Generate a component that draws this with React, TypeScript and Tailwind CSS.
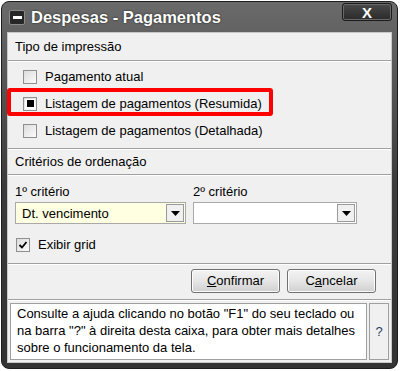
import React from 'react'

function Check({ mode }: { mode?: 'square' | 'tick' }) {
  return (
    <span className="flex h-[14px] w-[14px] shrink-0 items-center justify-center border border-[#8e8f8f] bg-gradient-to-br from-[#dcdcdc] to-[#fbfbfb]">
      {mode === 'square' && (
        <span className="flex h-[10px] w-[10px] items-center justify-center bg-white">
          <span className="h-[7px] w-[7px] bg-black" />
        </span>
      )}
      {mode === 'tick' && (
        <svg width="10" height="10" viewBox="0 0 10 10">
          <path d="M1.5 5 L4 7.5 L8.5 2" fill="none" stroke="#000" strokeWidth="1.8" />
        </svg>
      )}
    </span>
  )
}

function Select({ value, yellow }: { value?: string; yellow?: boolean }) {
  return (
    <div
      className={`flex h-[22px] items-center border border-[#a9a9a9] pl-[6px] pr-[1px] ${
        yellow ? 'bg-[#ffffe1]' : 'bg-white'
      }`}
    >
      <span className="flex-1 text-[13px] leading-none">{value}</span>
      <span className="flex h-[18px] w-[18px] items-center justify-center border border-[#9a9a9a] bg-[#f0f0f0]">
        <svg width="9" height="5" viewBox="0 0 9 5">
          <path d="M0 0 H9 L4.5 5 Z" fill="#000" />
        </svg>
      </span>
    </div>
  )
}

function Btn({ pre, u, rest }: { pre: string; u: string; rest: string }) {
  return (
    <button className="h-[24px] w-[89px] rounded-[3px] border border-[#707070] bg-gradient-to-b from-[#f3f3f3] via-[#e6e6e6] to-[#cfcfcf] text-[13px] text-black shadow-[inset_0_0_0_1px_#fcfcfc]">
      {pre}
      <span className="underline">{u}</span>
      {rest}
    </button>
  )
}

export default function App() {
  return (
    <div className="h-[371px] w-[400px] bg-white font-['Liberation_Sans',Arial,sans-serif] text-black">
      <div className="ml-[1px] mt-[1px] flex h-[368px] w-[397px] flex-col rounded-[8px] border border-[#1e1e1e] bg-gradient-to-b from-[#6a6a6a] via-[#3c3c3c] to-[#333333] px-[5px] pb-[5px]">
        {/* title bar */}
        <div className="relative flex h-[30px] items-center">
          <span className="ml-[2px] flex h-[15px] w-[16px] items-center justify-center rounded-[2px] border border-[#8a8a8a] bg-[#262626]">
            <span className="h-[3px] w-[9px] bg-white" />
          </span>
          <span className="ml-[6px] text-[16.5px] font-bold text-white [text-shadow:0_0_2px_rgba(0,0,0,0.8)]">
            Despesas - Pagamentos
          </span>
          <span className="absolute right-[0px] top-[1px] flex h-[18px] w-[50px] items-center justify-center rounded-[3px] border border-[#1a1a1a] bg-gradient-to-b from-[#4a4a4a] to-[#2a2a2a] shadow-[inset_0_0_0_1px_#6a6a6a]">
            <span className="text-[15px] font-bold leading-none text-white">X</span>
          </span>
        </div>

        {/* content */}
        <div className="relative flex flex-1 flex-col border border-[#c8c8c8] bg-[#f0f0f0]">
          <div className="flex h-[28px] items-center border-b border-[#a0a0a0] px-[7px] text-[13px]">
            Tipo de impressão
          </div>
          <div className="flex flex-col border-t border-white pb-[4px] pt-[1px]">
            <div className="flex h-[27px] items-center gap-[8px] pl-[15px] text-[13px]">
              <Check />
              <span>Pagamento atual</span>
            </div>
            <div className="flex h-[27px] items-center gap-[8px] pl-[15px] text-[13px]">
              <Check mode="square" />
              <span>Listagem de pagamentos (Resumida)</span>
            </div>
            <div className="flex h-[27px] items-center gap-[8px] pl-[15px] text-[13px]">
              <Check />
              <span>Listagem de pagamentos (Detalhada)</span>
            </div>
          </div>
          <div className="flex h-[27px] items-center border-y border-[#a0a0a0] px-[7px] text-[13px] shadow-[inset_0_1px_0_#fff]">
            Critérios de ordenação
          </div>
          <div className="flex flex-col border-t border-white px-[7px] pb-[8px] pt-[8px]">
            <div className="flex gap-[7px]">
              <div className="flex w-[171px] flex-col gap-[3px]">
                <span className="text-[13px] leading-[15px]">1º critério</span>
                <Select value="Dt. vencimento" yellow />
              </div>
              <div className="flex w-[164px] flex-col gap-[3px]">
                <span className="text-[13px] leading-[15px]">2º critério</span>
                <Select />
              </div>
            </div>
            <div className="mt-[11px] flex items-center gap-[8px] pl-[1px] text-[13px]">
              <Check mode="tick" />
              <span>Exibir grid</span>
            </div>
          </div>
          <div className="flex h-[37px] items-center justify-end gap-[7px] border-y border-[#a0a0a0] pr-[15px] shadow-[inset_0_1px_0_#fff]">
            <Btn pre="" u="C" rest="onfirmar" />
            <Btn pre="C" u="a" rest="ncelar" />
          </div>
          <div className="flex flex-1 gap-[2px] border-t border-white p-[2px]">
            <div className="flex-1 border border-[#a0a0a0] bg-white px-[6px] pt-[1px] text-[13px] leading-[17px]">
              Consulte a ajuda clicando no botão "F1" do seu teclado ou na barra "?" à direita desta caixa, para obter mais detalhes sobre o funcionamento da tela.
            </div>
            <div className="flex w-[20px] items-center justify-center border border-[#a0a0a0] text-[13px] text-[#2a3f5f]">
              ?
            </div>
          </div>

          {/* highlight annotation */}
          <div className="absolute left-[-1px] top-[55px] h-[28px] w-[266px] rounded-[3px] border-[4px] border-[#ff0000]" />
        </div>
      </div>
    </div>
  )
}
